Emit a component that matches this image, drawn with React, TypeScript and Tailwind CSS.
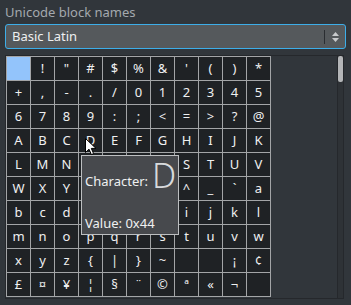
import React from "react";

const rows: string[][] = [
  [" ", "!", "\"", "#", "$", "%", "&", "'", "(", ")", "*"],
  ["+", ",", "-", ".", "/", "0", "1", "2", "3", "4", "5"],
  ["6", "7", "8", "9", ":", ";", "<", "=", ">", "?", "@"],
  ["A", "B", "C", "D", "E", "F", "G", "H", "I", "J", "K"],
  ["L", "M", "N", "", "", "", "", "S", "T", "U", "V"],
  ["W", "X", "Y", "", "", "", "", "^", "_", "`", "a"],
  ["b", "c", "d", "", "", "", "", "i", "j", "k", "l"],
  ["m", "n", "o", "p", "q", "r", "s", "t", "u", "v", "w"],
  ["x", "y", "z", "{", "|", "}", "~", "", "", "¡", "¢"],
  ["£", "¤", "¥", "¦", "§", "¨", "©", "ª", "«", "¬", ""],
];

export default function App() {
  const font = { fontFamily: '"Noto Sans", "Open Sans", sans-serif' };
  return (
    <div
      className="relative w-[351px] h-[305px] bg-[#31363b] overflow-hidden"
      style={font}
    >
      <div className="px-[5px] pt-[3px] h-[24px] text-[13px] leading-[18px] text-[#a4a9ae]">
        Unicode block names
      </div>
      <div className="mx-[5px] h-[25px] rounded-[3px] border border-[#3daee9] bg-[#55595c] flex items-center">
        <span className="flex-1 pl-[6px] text-[13px] text-[#eff0f1] leading-none">
          Basic Latin
        </span>
        <div className="w-px h-[14px] bg-[#2a2d31]" />
        <div className="w-[20px] flex flex-col items-center justify-center gap-[2px]">
          <svg width="7" height="4" viewBox="0 0 7 4">
            <path d="M0 4 L3.5 0 L7 4 Z" fill="#c8cacc" />
          </svg>
          <svg width="7" height="4" viewBox="0 0 7 4">
            <path d="M0 0 L3.5 4 L7 0 Z" fill="#c8cacc" />
          </svg>
        </div>
      </div>
      <div className="mt-[6px] ml-[5px] w-[339px] h-[244px] border border-[#25282c] flex">
        <div className="flex-1">
          <div className="grid grid-cols-[repeat(11,23px)] auto-rows-[23px] gap-px bg-[#a3a5a7] border border-[#a3a5a7] w-[265px]">
            {rows.flat().map((c, i) => (
              <div
                key={i}
                className={
                  "flex items-center justify-center text-[13px] leading-none text-[#eff0f1] " +
                  (i === 0 ? "bg-[#93c4fb]" : "bg-[#1f2225]")
                }
              >
                {c}
              </div>
            ))}
          </div>
        </div>
        <div className="w-[6px] border-l border-[#25282c] bg-[#2e3236]">
          <div className="h-[26px] w-[5px] rounded-[2px] bg-[#b4b6b8]" />
        </div>
      </div>

      {/* tooltip */}
      <div className="absolute left-[81px] top-[155px] w-[98px] h-[80px] bg-[#47494d] border border-[#bdbfc1] text-[#eff0f1]">
        <div className="flex items-end pl-[3px] pt-[2px] h-[36px]">
          <span className="text-[13px] leading-none mb-[4px]">Character:</span>
          <span className="ml-[4px] text-[34px] font-light leading-none text-[#d8dadc]">
            D
          </span>
        </div>
        <div className="pl-[3px] mt-[25px] text-[13px] leading-none">Value: 0x44</div>
      </div>

      {/* cursor */}
      <svg
        className="absolute left-[85px] top-[138px]"
        width="12"
        height="18"
        viewBox="0 0 12 18"
      >
        <path
          d="M0.5 0.5 L0.5 14.5 L4 11.2 L6.4 16.6 L8.6 15.6 L6.3 10.4 L11 10.4 Z"
          fill="#ffffff"
          stroke="#000000"
          strokeWidth="1"
          strokeLinejoin="round"
        />
      </svg>
    </div>
  );
}
